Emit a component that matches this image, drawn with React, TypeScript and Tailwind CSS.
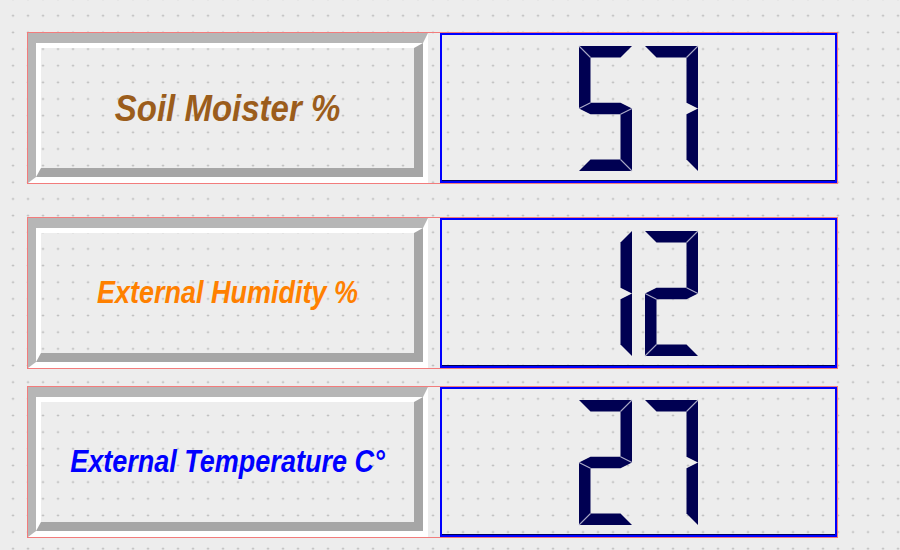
import React from "react";

const W = 53;
const H = 125;
const T = 11.5;
const M = H / 2;

const SEG: Record<string, number[][]> = {
  a: [[0, 0], [W, 0], [W - T, T], [T, T]],
  b: [[W, 0], [W, M], [W - T, M - T / 2], [W - T, T]],
  c: [[W, M], [W, H], [W - T, H - T], [W - T, M + T / 2]],
  d: [[0, H], [T, H - T], [W - T, H - T], [W, H]],
  e: [[0, M], [T, M + T / 2], [T, H - T], [0, H]],
  f: [[0, 0], [T, T], [T, M - T / 2], [0, M]],
  g: [[0, M], [T, M - T / 2], [W - T, M - T / 2], [W, M], [W - T, M + T / 2], [T, M + T / 2]],
};

const JOINS: [string, string, number[]][] = [
  ["a", "f", [0, 0, T, T]],
  ["a", "b", [W, 0, W - T, T]],
  ["f", "g", [0, M, T, M - T / 2]],
  ["e", "g", [0, M, T, M + T / 2]],
  ["b", "g", [W, M, W - T, M - T / 2]],
  ["c", "g", [W, M, W - T, M + T / 2]],
  ["e", "d", [0, H, T, H - T]],
  ["c", "d", [W, H, W - T, H - T]],
];

const DIGITS: Record<string, string> = {
  "0": "abcdef",
  "1": "bc",
  "2": "abged",
  "3": "abgcd",
  "4": "fgbc",
  "5": "afgcd",
  "6": "afgedc",
  "7": "abc",
  "8": "abcdefg",
  "9": "abcdfg",
};

function Digit({ ch }: { ch: string }) {
  const segs = DIGITS[ch] ?? "";
  return (
    <svg width={W} height={H} viewBox={`0 0 ${W} ${H}`} className="overflow-visible">
      {segs.split("").map((s) => (
        <polygon
          key={s}
          points={SEG[s].map((p) => p.join(",")).join(" ")}
          fill="#000052"
        />
      ))}
      {JOINS.filter(([p, q]) => segs.includes(p) && segs.includes(q)).map(([p, q, l]) => (
        <line
          key={p + q}
          x1={l[0]}
          y1={l[1]}
          x2={l[2]}
          y2={l[3]}
          stroke="#a9a9c6"
          strokeWidth={1.1}
        />
      ))}
    </svg>
  );
}

function Row({
  label,
  value,
  textClass,
  mt,
}: {
  label: string;
  value: string;
  textClass: string;
  mt: string;
}) {
  return (
    <div className={`flex h-[152px] w-[811px] border border-[#f27c7c] ${mt}`}>
      <div className="h-full w-[400px] border-t-[10px] border-l-[8px] border-b-[6px] border-r-[5px] border-t-[#b6b6b6] border-l-[#b6b6b6] border-b-white border-r-white">
        <div className="flex h-full items-center justify-center border-t-[5px] border-l-[5px] border-b-[9px] border-r-[9px] border-t-white border-l-white border-b-[#a6a6a6] border-r-[#a6a6a6]">
          <span
            className={`inline-block scale-y-[1.13] font-bold italic leading-none whitespace-nowrap ${textClass}`}
            style={{ fontFamily: '"Liberation Sans", Arial, sans-serif' }}
          >
            {label}
          </span>
        </div>
      </div>
      <div className="ml-[12px] flex h-full w-[397px] items-center justify-center gap-[13px] border-2 border-[#0000ff] shadow-[inset_0_-1px_0_#00005a]">
        {value.split("").map((ch, i) => (
          <Digit key={i} ch={ch} />
        ))}
      </div>
    </div>
  );
}

export default function App() {
  return (
    <div className="min-h-[550px] w-[900px] overflow-hidden bg-[#ededed] bg-[radial-gradient(circle,#acacac_0.7px,transparent_1.2px)] bg-[length:15px_16.667px] bg-[position:5.5px_7.4px] pl-[27px] pt-[32px]">
      <Row label="Soil Moister %" value="57" textClass="text-[33px] text-[#9b5d1c]" mt="" />
      <Row label="External Humidity %" value="12" textClass="text-[27px] text-[#ff8000]" mt="mt-[33px]" />
      <Row label="External Temperature C°" value="27" textClass="text-[27px] text-[#0000ff]" mt="mt-[17px]" />
    </div>
  );
}
